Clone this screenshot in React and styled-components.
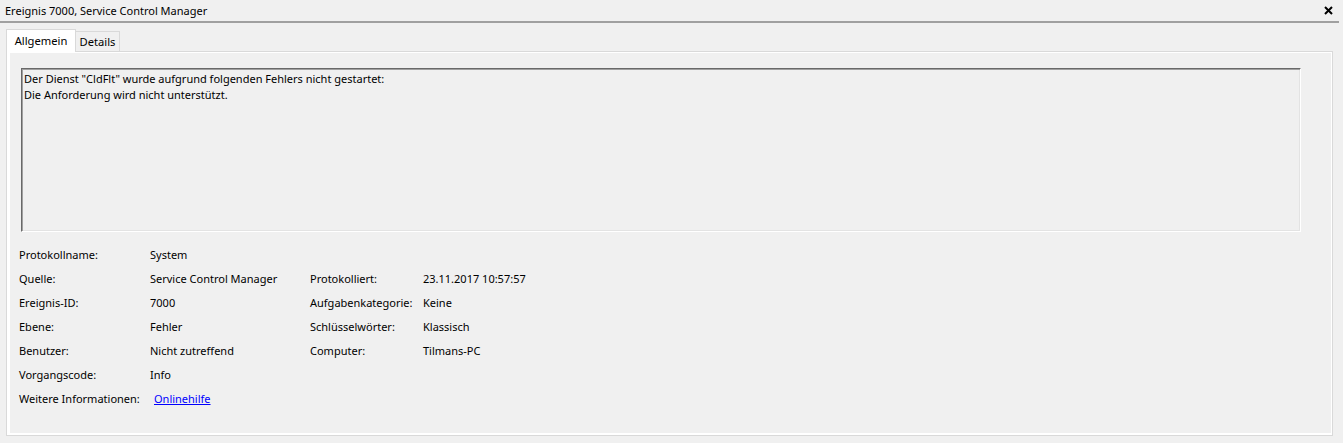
import styled, { createGlobalStyle } from 'styled-components';

const GlobalStyle = createGlobalStyle`
  html, body {
    margin: 0;
    padding: 0;
    background: #f0f0f0;
  }
  body {
    font-family: "Noto Sans", "Liberation Sans", sans-serif;
    font-size: 11px;
    color: #000;
  }
`;

const Window = styled.div`
  width: 1343px;
  height: 443px;
  background: #f0f0f0;
  overflow: hidden;
`;

const TitleBar = styled.div`
  display: flex;
  align-items: center;
  justify-content: space-between;
  height: 21px;
  margin-right: 4px;
  padding-left: 5px;
  padding-right: 6px;
  border-bottom: 2px solid #a0a0a0;
`;

const Title = styled.span`
  line-height: 16px;
  font-size: 11px;
`;

const CloseButton = styled.span`
  display: flex;
  align-items: center;
  margin-top: -1px;
`;

const TabArea = styled.div`
  padding: 6px 0 0 6px;
`;

const TabStrip = styled.div`
  display: flex;
  align-items: flex-end;
  height: 23px;
`;

const Tab = styled.div`
  position: relative;
  box-sizing: border-box;
  width: ${({ $width }) => $width}px;
  height: ${({ $active }) => ($active ? 23 : 20)}px;
  margin-bottom: ${({ $active }) => ($active ? 0 : 1)}px;
  border: 1px solid #d9d9d9;
  border-bottom: none;
  border-left: ${({ $active }) => ($active ? '1px solid #d9d9d9' : 'none')};
  background: ${({ $active }) => ($active ? '#ffffff' : '#f0f0f0')};
  text-align: center;
  font-size: 11.2px;
  line-height: ${({ $active }) => ($active ? 21 : 19)}px;
  z-index: ${({ $active }) => ($active ? 1 : 0)};
`;

const Panel = styled.div`
  box-sizing: border-box;
  width: 1327px;
  height: 385px;
  margin-top: -1px;
  border: 1px solid #d9d9d9;
  background: #ffffff;
  padding: 1px 1px 2px 3px;
`;

const Page = styled.div`
  height: 100%;
  background: #f0f0f0;
  padding: 15px 0 0 11px;
  box-sizing: border-box;
`;

const MessageBox = styled.div`
  box-sizing: border-box;
  width: 1280px;
  height: 164px;
  border-style: solid;
  border-width: 1px;
  border-color: #696969 #ffffff #ffffff #696969;
  box-shadow: inset 1px 1px 0 #a0a0a0, inset -1px -1px 0 #e3e3e3;
  padding: 2px 2px;
  line-height: 16px;
`;

const InfoGrid = styled.div`
  display: grid;
  grid-template-columns: 131px 160px 113px auto;
  grid-auto-rows: 16px;
  row-gap: 8px;
  margin: 15px 0 0 -2px;
  line-height: 16px;
  white-space: nowrap;
`;

const Label = styled.span``;

const Value = styled.span``;

const Link = styled.a`
  color: #0000ff;
  text-decoration: underline;
  margin-left: 4px;
  cursor: pointer;
`;

const rows = [
  ['Protokollname:', 'System'],
  ['Quelle:', 'Service Control Manager', 'Protokolliert:', '23.11.2017 10:57:57'],
  ['Ereignis-ID:', '7000', 'Aufgabenkategorie:', 'Keine'],
  ['Ebene:', 'Fehler', 'Schlüsselwörter:', 'Klassisch'],
  ['Benutzer:', 'Nicht zutreffend', 'Computer:', 'Tilmans-PC'],
  ['Vorgangscode:', 'Info'],
];

export default function App() {
  return (
    <Window>
      <GlobalStyle />
      <TitleBar>
        <Title>Ereignis 7000, Service Control Manager</Title>
        <CloseButton>
          <svg width="9" height="9" viewBox="0 0 9 9">
            <path d="M1 1 L8 8 M8 1 L1 8" stroke="#000" strokeWidth="2" />
          </svg>
        </CloseButton>
      </TitleBar>
      <TabArea>
        <TabStrip>
          <Tab $active $width={70}>Allgemein</Tab>
          <Tab $width={44}>Details</Tab>
        </TabStrip>
        <Panel>
          <Page>
            <MessageBox>
              Der Dienst "CldFlt" wurde aufgrund folgenden Fehlers nicht gestartet:
              <br />
              Die Anforderung wird nicht unterstützt.
            </MessageBox>
            <InfoGrid>
              {rows.map((r, i) => (
                <>
                  <Label key={`l${i}`}>{r[0]}</Label>
                  <Value key={`v${i}`}>{r[1]}</Value>
                  <Label key={`l2${i}`}>{r[2] || ''}</Label>
                  <Value key={`v2${i}`}>{r[3] || ''}</Value>
                </>
              ))}
              <Label>Weitere Informationen:</Label>
              <Value>
                <Link>Onlinehilfe</Link>
              </Value>
            </InfoGrid>
          </Page>
        </Panel>
      </TabArea>
    </Window>
  );
}
